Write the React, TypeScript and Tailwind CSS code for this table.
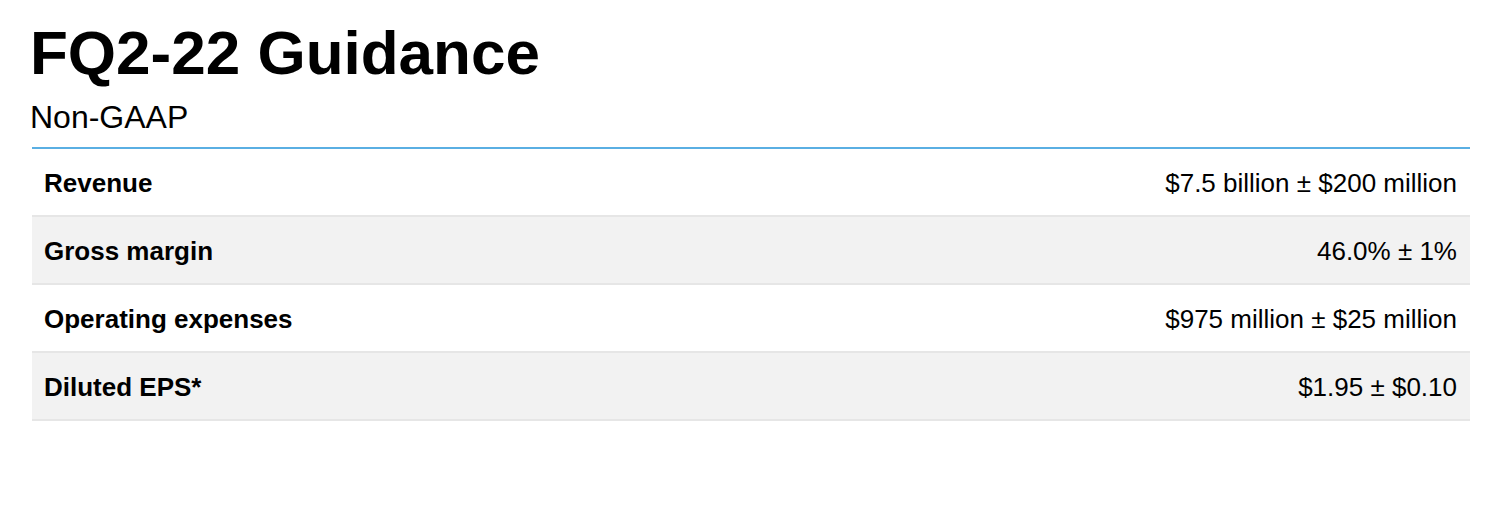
const rows = [
  { label: 'Revenue', value: '$7.5 billion ± $200 million' },
  { label: 'Gross margin', value: '46.0% ± 1%' },
  { label: 'Operating expenses', value: '$975 million ± $25 million' },
  { label: 'Diluted EPS*', value: '$1.95 ± $0.10' },
]

export default function App() {
  return (
    <div className="w-[1500px] h-[505px] bg-white text-black font-['Liberation_Sans',Arial,sans-serif]">
      <div className="px-[30px] pt-[22px]">
        <h1 className="text-[62px] leading-none font-bold">FQ2-22 Guidance</h1>
        <p className="text-[32px] leading-none mt-[17px]">Non-GAAP</p>
      </div>
      <div className="ml-[32px] mr-[30px] mt-[14px] border-t-2 border-[#5aafe3]">
        {rows.map((r, i) => (
          <div
            key={r.label}
            className={
              'flex items-center justify-between h-[68px] pl-[12px] pr-[13px] pt-[2px] border-b-2 border-[#e6e6e6] text-[26px] ' +
              (i % 2 === 1 ? 'bg-[#f2f2f2]' : 'bg-white')
            }
          >
            <span className="font-bold">{r.label}</span>
            <span>{r.value}</span>
          </div>
        ))}
      </div>
    </div>
  )
}
